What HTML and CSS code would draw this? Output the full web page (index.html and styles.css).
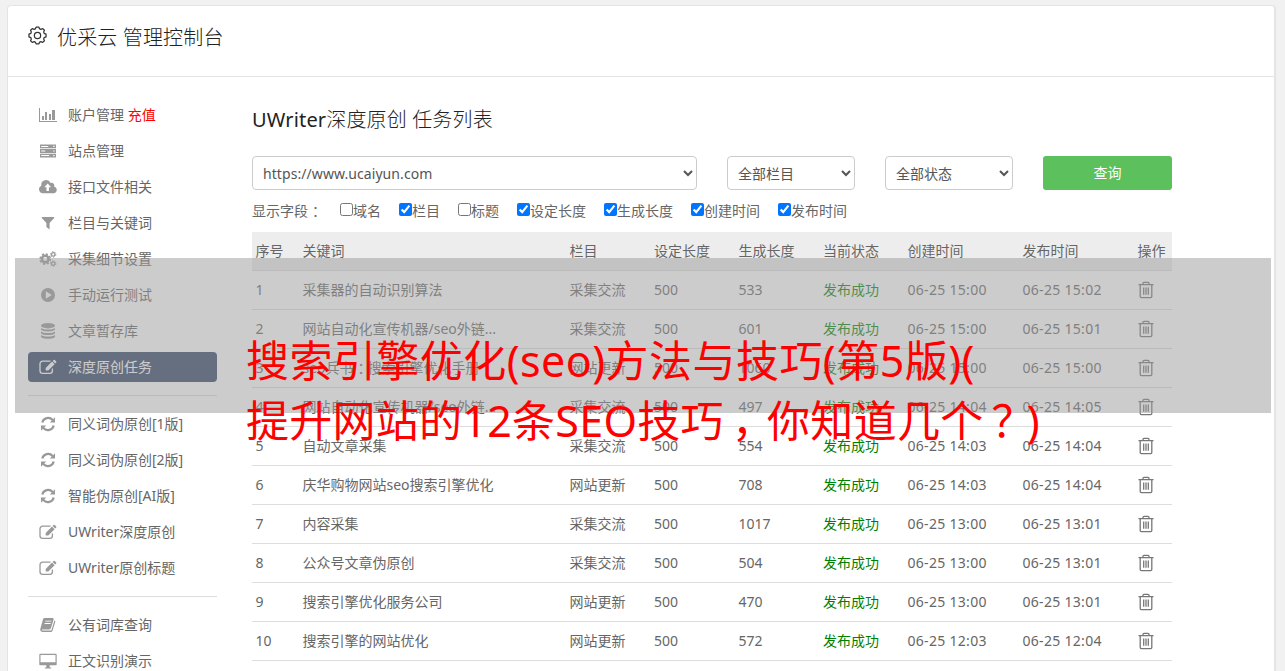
FILE: index.html
```html
<!DOCTYPE html>
<html lang="zh-CN">

<head>
  <meta charset="UTF-8" />
  <meta name="viewport" content="width=device-width, initial-scale=1.0" />
  <title>优采云 管理控制台</title>
  <link rel="stylesheet" href="styles.css">
</head>

<body>
  <svg class="sprite" aria-hidden="true">
    <symbol id="i-gear" viewBox="0 0 20 20">
      <path d="M8.500 1.200h3l.8 1.900 1.300.500 1.900-.900 1.800 1.800-.8 1.900.5 1.300 2 .8v3l-2 .8-.5 1.300.8 1.900-1.800 1.800-1.900-.900-1.300.500-.8 1.900h-3l-.8-1.900-1.300-.500-1.900.900-1.800-1.800.8-1.900-.5-1.300-2-.8v-3l2-.8.5-1.300-.8-1.900 1.800-1.800 1.900.900 1.300-.500z" fill="none" stroke="currentColor" stroke-width="1.300" stroke-linejoin="round" />
      <circle cx="10" cy="10" r="3.300" fill="none" stroke="currentColor" stroke-width="1.300" />
    </symbol>
    <symbol id="i-chart" viewBox="0 0 18 16">
      <path d="M0 1h1v13h17v1H0zM3 9h2v4H3zM6 5h2v8H6zM10 7h2v6h-2zM13 3h3v10h-3z" />
    </symbol>
    <symbol id="i-server" viewBox="0 0 18 16">
      <path fill-rule="evenodd" d="M1 1.500h16v3.800H1zM2.200 2.900v1h7v-1zM14.200 2.800v1.200h1.400V2.800zM1 6.100h16v3.800H1zM2.200 7.500v1h4v-1zM14.200 7.400v1.200h1.400V7.400zM1 10.700h16v3.800H1zM2.200 12.100v1h8v-1zM14.200 12v1.200h1.400V12z" />
    </symbol>
    <symbol id="i-cloud" viewBox="0 0 18 16">
      <path fill-rule="evenodd" d="M4.200 14.300A4 4 0 0 1 2.300 6.700 4.900 4.900 0 0 1 11.600 4a2.700 2.700 0 0 1 3.500 3.400A3.500 3.500 0 0 1 14.500 14.300zM8.700 4.600L5.300 8.200h2.200v3.900h2.400V8.200h2.200z" />
    </symbol>
    <symbol id="i-filter" viewBox="0 0 18 16">
      <path d="M2.800 2h12.400v.9L10.600 8v6.600L7.400 12V8L2.800 2.900z" />
    </symbol>
    <symbol id="i-cogs" viewBox="0 0 18 16">
      <circle cx="6.200" cy="8" r="3.300" fill="none" stroke="currentColor" stroke-width="2.400" />
      <circle cx="6.200" cy="8" r="5.100" fill="none" stroke="currentColor" stroke-width="1.600" stroke-dasharray="2.200 1.800" />
      <circle cx="14.200" cy="3.400" r="1.700" fill="none" stroke="currentColor" stroke-width="1.300" />
      <circle cx="14.200" cy="3.400" r="2.700" fill="none" stroke="currentColor" stroke-width="1" stroke-dasharray="1.400 1.400" />
      <circle cx="14.200" cy="12.600" r="1.700" fill="none" stroke="currentColor" stroke-width="1.300" />
      <circle cx="14.200" cy="12.600" r="2.700" fill="none" stroke="currentColor" stroke-width="1" stroke-dasharray="1.400 1.400" />
    </symbol>
    <symbol id="i-play" viewBox="0 0 18 16">
      <path fill-rule="evenodd" d="M9 1a7 7 0 1 0 0 14A7 7 0 0 0 9 1zM6.800 4.300L12.800 8l-6 3.700z" />
    </symbol>
    <symbol id="i-database" viewBox="0 0 18 16">
      <ellipse cx="9" cy="2.700" rx="7" ry="2.700" />
      <path d="M2 4.900c3 2 11 2 14 0v1.700c-1 2.500-13 2.500-14 0zM2 8.500c3 2 11 2 14 0v1.700c-1 2.500-13 2.500-14 0zM2 12.100c3 2 11 2 14 0v1.600c-1 2.800-13 2.800-14 0z" />
    </symbol>
    <symbol id="i-edit" viewBox="0 0 18 16">
      <path d="M11.500 2.200H3.600a2.600 2.600 0 0 0-2.600 2.600v6.900a2.600 2.600 0 0 0 2.600 2.600h7.200a2.600 2.600 0 0 0 2.600-2.600V9.500" fill="none" stroke="currentColor" stroke-width="1.300" />
      <path d="M13 2.600l2.600 2.600-6.300 6.300H6.700V8.900zM13.600 2l1-1q.6-.5 1.200 0l1.400 1.400q.5.600 0 1.200l-1 1z" />
    </symbol>
    <symbol id="i-refresh" viewBox="0 0 18 16">
      <path d="M3.300 6.600A6 6 0 0 1 13.600 4M14.700 9.400A6 6 0 0 1 4.400 12" fill="none" stroke="currentColor" stroke-width="2.200" />
      <path d="M16 1.300v5.200h-5.200zM2 14.700V9.500h5.200z" />
    </symbol>
    <symbol id="i-book" viewBox="0 0 18 16">
      <path fill-rule="evenodd" d="M5.500 1h8.300q1.200.2.8 1.500l-2.700 8.800q-.4 1.100-1.600 1.100H3.200q-.9.700.3 1.200h8q.8 0 1-.7L15.400 3.600q1.200.3.800 1.500l-2.700 8.600q-.4 1.200-1.700 1.200H3.400Q.9 14.500 1.300 12L4 2.300Q4.500 1 5.500 1zM6.500 3.700l-.3.900h6l.3-.9zM5.800 6l-.3.900h6l.3-.9z" />
    </symbol>
    <symbol id="i-desktop" viewBox="0 0 18 16">
      <path fill-rule="evenodd" d="M1.300.700h15.400q1 0 1 1v9.600q0 1-1 1h-6V14.400h1.500v1H5.800v-1h1.500v-2.100h-6q-1 0-1-1V1.700q0-1 1-1zM1.500 1.900v7.400h15V1.900z" />
    </symbol>
    <symbol id="i-trash" viewBox="0 0 16 18">
      <path d="M.5 3.700h15M5 3.500V2.300Q5 1.300 6 1.300h4q1 0 1 1v1.200M2.200 4v11.500q0 1.100 1.100 1.100h9.400q1.100 0 1.100-1.100V4M5.700 6.500v7.300M8 6.500v7.300M10.300 6.500v7.300" fill="none" stroke="currentColor" stroke-width="1.300" />
    </symbol>
  </svg>

  <div class="panel">
    <header class="panel-head">
      <svg class="gear"><use href="#i-gear" /></svg>
      <h1>优采云 管理控制台</h1>
    </header>

    <div class="panel-body">
      <nav class="sidebar">
        <a class="item"><svg><use href="#i-chart" /></svg>账户管理 <span class="recharge">充值</span></a>
        <a class="item"><svg><use href="#i-server" /></svg>站点管理</a>
        <a class="item"><svg><use href="#i-cloud" /></svg>接口文件相关</a>
        <a class="item"><svg><use href="#i-filter" /></svg>栏目与关键词</a>
        <a class="item"><svg><use href="#i-cogs" /></svg>采集细节设置</a>
        <a class="item"><svg><use href="#i-play" /></svg>手动运行测试</a>
        <a class="item"><svg><use href="#i-database" /></svg>文章暂存库</a>
        <a class="item active"><svg><use href="#i-edit" /></svg>深度原创任务</a>
        <hr>
        <a class="item"><svg><use href="#i-refresh" /></svg>同义词伪原创[1版]</a>
        <a class="item"><svg><use href="#i-refresh" /></svg>同义词伪原创[2版]</a>
        <a class="item"><svg><use href="#i-refresh" /></svg>智能伪原创[AI版]</a>
        <a class="item"><svg><use href="#i-edit" /></svg>UWriter深度原创</a>
        <a class="item"><svg><use href="#i-edit" /></svg>UWriter原创标题</a>
        <hr>
        <a class="item"><svg><use href="#i-book" /></svg>公有词库查询</a>
        <a class="item"><svg><use href="#i-desktop" /></svg>正文识别演示</a>
      </nav>

      <main class="content">
        <h2><span class="latin">UWriter</span>深度原创 任务列表</h2>

        <div class="filters">
          <select class="site"><option>https://www.ucaiyun.com</option></select>
          <select><option>全部栏目</option></select>
          <select><option>全部状态</option></select>
          <button type="button">查询</button>
        </div>

        <div class="fields">
          <span class="fields-title">显示字段<span class="colon">：</span></span>
          <label><input type="checkbox">域名</label>
          <label><input type="checkbox" checked>栏目</label>
          <label><input type="checkbox">标题</label>
          <label><input type="checkbox" checked>设定长度</label>
          <label><input type="checkbox" checked>生成长度</label>
          <label><input type="checkbox" checked>创建时间</label>
          <label><input type="checkbox" checked>发布时间</label>
        </div>

        <table class="tasks">
          <colgroup>
            <col class="c-no"><col class="c-word"><col class="c-len"><col class="c-len"><col class="c-len"><col class="c-len"><col class="c-time"><col class="c-time"><col>
          </colgroup>
          <thead>
            <tr><th>序号</th><th>关键词</th><th>栏目</th><th>设定长度</th><th>生成长度</th><th>当前状态</th><th>创建时间</th><th>发布时间</th><th>操作</th></tr>
          </thead>
          <tbody>
            <tr><td>1</td><td>采集器的自动识别算法</td><td>采集交流</td><td>500</td><td>533</td><td class="ok">发布成功</td><td class="time">06-25 15:00</td><td class="time">06-25 15:02</td><td><svg><use href="#i-trash" /></svg></td></tr>
            <tr><td>2</td><td>网站自动化宣传机器/seo外链...</td><td>采集交流</td><td>500</td><td>601</td><td class="ok">发布成功</td><td class="time">06-25 15:00</td><td class="time">06-25 15:01</td><td><svg><use href="#i-trash" /></svg></td></tr>
            <tr><td>3</td><td>seo兵书<span class="colon">：</span>搜索引擎优化手册</td><td>网站更新</td><td>500</td><td>1060</td><td class="ok">发布成功</td><td class="time">06-25 15:00</td><td class="time">06-25 15:00</td><td><svg><use href="#i-trash" /></svg></td></tr>
            <tr><td>4</td><td>网站自动化宣传机器/seo外链...</td><td>采集交流</td><td>500</td><td>497</td><td class="ok">发布成功</td><td class="time">06-25 14:04</td><td class="time">06-25 14:05</td><td><svg><use href="#i-trash" /></svg></td></tr>
            <tr><td>5</td><td>自动文章采集</td><td>采集交流</td><td>500</td><td>554</td><td class="ok">发布成功</td><td class="time">06-25 14:03</td><td class="time">06-25 14:04</td><td><svg><use href="#i-trash" /></svg></td></tr>
            <tr><td>6</td><td>庆华购物网站seo搜索引擎优化</td><td>网站更新</td><td>500</td><td>708</td><td class="ok">发布成功</td><td class="time">06-25 14:03</td><td class="time">06-25 14:04</td><td><svg><use href="#i-trash" /></svg></td></tr>
            <tr><td>7</td><td>内容采集</td><td>采集交流</td><td>500</td><td>1017</td><td class="ok">发布成功</td><td class="time">06-25 13:00</td><td class="time">06-25 13:01</td><td><svg><use href="#i-trash" /></svg></td></tr>
            <tr><td>8</td><td>公众号文章伪原创</td><td>采集交流</td><td>500</td><td>504</td><td class="ok">发布成功</td><td class="time">06-25 13:00</td><td class="time">06-25 13:01</td><td><svg><use href="#i-trash" /></svg></td></tr>
            <tr><td>9</td><td>搜索引擎优化服务公司</td><td>网站更新</td><td>500</td><td>470</td><td class="ok">发布成功</td><td class="time">06-25 13:00</td><td class="time">06-25 13:01</td><td><svg><use href="#i-trash" /></svg></td></tr>
            <tr><td>10</td><td>搜索引擎的网站优化</td><td>网站更新</td><td>500</td><td>572</td><td class="ok">发布成功</td><td class="time">06-25 12:03</td><td class="time">06-25 12:04</td><td><svg><use href="#i-trash" /></svg></td></tr>
          </tbody>
        </table>
      </main>
    </div>
  </div>

  <div class="mask"></div>
  <div class="caption">
    <div class="line1">搜索引擎优化(seo)方法与技巧(第5版)(</div>
    <div class="line2">提升网站的12条SEO技巧<span class="comma">，</span>你知道几个<span class="question">？</span>)</div>
  </div>
</body>

</html>
```
FILE: styles.css
```css
* {
  box-sizing: border-box;
}

body {
  margin: 0;
  height: 671px;
  padding: 5px 9px 0 7px;
  overflow: hidden;
  position: relative;
  background: #f1f1f1;
  color: #666;
  font: 14px/20px "Noto Sans", "Noto Sans CJK SC", sans-serif;
}

h1,
h2 {
  margin: 0;
  font-size: 20px;
  font-weight: 300;
  letter-spacing: 0.15px;
  color: #222;
}

svg {
  fill: currentColor;
}

.sprite {
  position: absolute;
  width: 0;
  height: 0;
}

.panel {
  height: 666px;
  overflow: hidden;
  background: #fff;
  border: 1px solid #e4e4e4;
  border-right-width: 2px;
  border-bottom: 0;
  border-radius: 4px 4px 0 0;
}

.panel-head {
  display: flex;
  align-items: center;
  height: 71px;
  padding: 0 20px 9px;
  border-bottom: 1px solid #e4e4e4;
}

.panel-head h1 {
  padding-top: 2px;
}

.gear {
  width: 19px;
  height: 19px;
  margin: 0 10px 2px 0;
  color: #333;
}

.panel-body {
  display: flex;
  gap: 35px;
  height: 595px;
  padding: 23px 20px 0;
  overflow: hidden;
}

/* sidebar */
.sidebar {
  width: 189px;
  flex: none;
}

.item {
  display: flex;
  align-items: center;
  height: 30px;
  margin-bottom: 6px;
  padding-left: 11px;
  border-radius: 4px;
  white-space: pre;
}

.item svg {
  width: 18px;
  height: 16px;
  margin-right: 11px;
  color: #999;
}

.item.active {
  background: #334567;
  color: #fff;
}

.item.active svg {
  color: #fff;
}

.recharge {
  color: #f00;
}

.sidebar hr {
  height: 1px;
  margin: 13px 0;
  border: 0;
  background: #ddd;
}

.item:has(+ hr) {
  margin-bottom: 0;
}

/* content */
.content {
  width: 920px;
}

h2 {
  padding-top: 10px;
}

h2 .latin {
  font-weight: 400;
}

.filters {
  display: flex;
  gap: 30px;
  margin-top: 26px;
}

.filters select {
  width: 128px;
  height: 34px;
  padding: 0 6px;
  border: 1px solid #ccc;
  border-radius: 4px;
  background: #fff;
  color: #555;
  font: inherit;
}

.filters .site {
  width: 445px;
  letter-spacing: 0.07px;
}

.filters button {
  width: 129px;
  padding: 0;
  border: 0;
  border-radius: 3px;
  background: #5cc05c;
  color: #fff;
  font: inherit;
}

.fields {
  display: flex;
  gap: 18px;
  height: 20px;
  margin: 11px 0;
  white-space: nowrap;
}

.fields-title {
  width: 70px;
}

.fields label {
  display: flex;
}

.fields input {
  width: 13px;
  height: 13px;
  margin: 2px 0 0;
}

.colon {
  padding-left: 4px;
  margin-right: -4px;
}

.tasks {
  width: 920px;
  table-layout: fixed;
  border-collapse: separate;
  border-spacing: 0;
}

.tasks th,
.tasks td {
  height: 39px;
  padding: 0 0 0 3.5px;
  border-bottom: 1px solid #ddd;
  text-align: left;
  font-weight: normal;
  white-space: nowrap;
}

.tasks th {
  background: #ededed;
}

.tasks svg {
  display: block;
  width: 16px;
  height: 18px;
  margin-left: 0.5px;
  color: #777;
}

.tasks .ok {
  color: #008000;
}

.tasks .time {
  letter-spacing: 0.3px;
}

.c-no { width: 47px; }
.c-word { width: 267px; }
.c-len { width: 84.5px; }
.c-time { width: 115px; }

/* banner over the page */
.mask {
  position: absolute;
  left: 15px;
  top: 258px;
  width: 1256px;
  height: 155px;
  background: rgba(153, 153, 153, 0.5);
}

.caption {
  position: absolute;
  left: 246px;
  top: 331px;
  color: #f00;
  font-size: 43px;
  line-height: 60px;
  white-space: nowrap;
}

.line1 {
  letter-spacing: 0.45px;
}

.line2 {
  letter-spacing: 0.27px;
}

.comma {
  padding-left: 8px;
  margin-right: -8px;
}

.question {
  padding-left: 8px;
  margin-right: -8px;
}
```
